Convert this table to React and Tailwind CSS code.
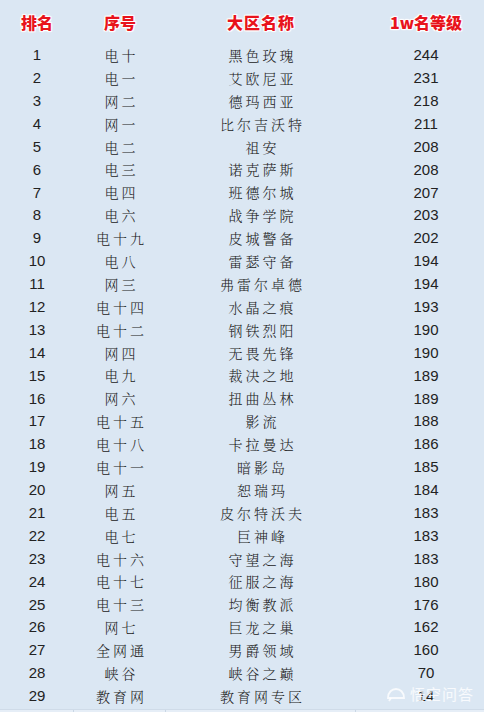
import React from "react";

const rows = [
  ["1", "电十", "黑色玫瑰", "244"],
  ["2", "电一", "艾欧尼亚", "231"],
  ["3", "网二", "德玛西亚", "218"],
  ["4", "网一", "比尔吉沃特", "211"],
  ["5", "电二", "祖安", "208"],
  ["6", "电三", "诺克萨斯", "208"],
  ["7", "电四", "班德尔城", "207"],
  ["8", "电六", "战争学院", "203"],
  ["9", "电十九", "皮城警备", "202"],
  ["10", "电八", "雷瑟守备", "194"],
  ["11", "网三", "弗雷尔卓德", "194"],
  ["12", "电十四", "水晶之痕", "193"],
  ["13", "电十二", "钢铁烈阳", "190"],
  ["14", "网四", "无畏先锋", "190"],
  ["15", "电九", "裁决之地", "189"],
  ["16", "网六", "扭曲丛林", "189"],
  ["17", "电十五", "影流", "188"],
  ["18", "电十八", "卡拉曼达", "186"],
  ["19", "电十一", "暗影岛", "185"],
  ["20", "网五", "恕瑞玛", "184"],
  ["21", "电五", "皮尔特沃夫", "183"],
  ["22", "电七", "巨神峰", "183"],
  ["23", "电十六", "守望之海", "183"],
  ["24", "电十七", "征服之海", "180"],
  ["25", "电十三", "均衡教派", "176"],
  ["26", "网七", "巨龙之巢", "162"],
  ["27", "全网通", "男爵领域", "160"],
  ["28", "峡谷", "峡谷之巅", "70"],
  ["29", "教育网", "教育网专区", "14"],
];

const cols = "grid grid-cols-[74px_92px_190px_128px]";
const cjk = { fontFamily: '"Noto Serif CJK SC", "Noto Sans CJK SC", serif' };
const num = { fontFamily: '"Liberation Sans", Arial, sans-serif' };
const head = {
  fontFamily: '"Noto Sans CJK SC", sans-serif',
  textShadow:
    "0 0 2px #fff, 0 0 2px #fff, 1px 1px 1px #fff, -1px -1px 1px #fff, 1px -1px 1px #fff, -1px 1px 1px #fff",
};

export default function App() {
  return (
    <div className="relative w-[484px] h-[712px] overflow-hidden bg-[#dbe7f3] text-[#222]">
      <div className={`${cols} h-[44px] items-center text-[16px] font-black text-[#e8131c]`} style={head}>
        <div className="text-center">排名</div>
        <div className="text-center">序号</div>
        <div className="text-center tracking-[1px]">大区名称</div>
        <div className="text-center pl-3">1w名等级</div>
      </div>
      {rows.map((r) => (
        <div key={r[0]} className={`${cols} h-[22.9px] items-center`}>
          <div className="text-center text-[15px]" style={num}>{r[0]}</div>
          <div className="text-center text-[14px] tracking-[3px] pl-[3px] font-light" style={cjk}>{r[1]}</div>
          <div className="text-center text-[14px] tracking-[3px] pl-[3px] font-light" style={cjk}>{r[2]}</div>
          <div className="text-center text-[15px] pl-3" style={num}>{r[3]}</div>
        </div>
      ))}
      <div className={`${cols} h-[10px] mt-[1px] bg-[#e6eef7] border-t border-[#cfdbe8]`}>
        <div className="border-r border-[#c9d6e4]" />
        <div className="border-r border-[#c9d6e4]" />
        <div className="border-r border-[#c9d6e4]" />
        <div />
      </div>
      <div className="absolute right-[10px] bottom-[7px] flex items-center gap-1 text-white/80">
        <svg width="20" height="16" viewBox="0 0 20 16" fill="none" stroke="currentColor" strokeWidth="1.8">
          <path d="M2 12 C2 6 6 3 10 3 C14 3 18 6 18 12 Z" />
          <path d="M5 12 L3 15" />
        </svg>
        <span className="text-[15px] tracking-[1px]" style={{ fontFamily: '"Noto Sans CJK SC", sans-serif' }}>悟空问答</span>
      </div>
    </div>
  );
}
